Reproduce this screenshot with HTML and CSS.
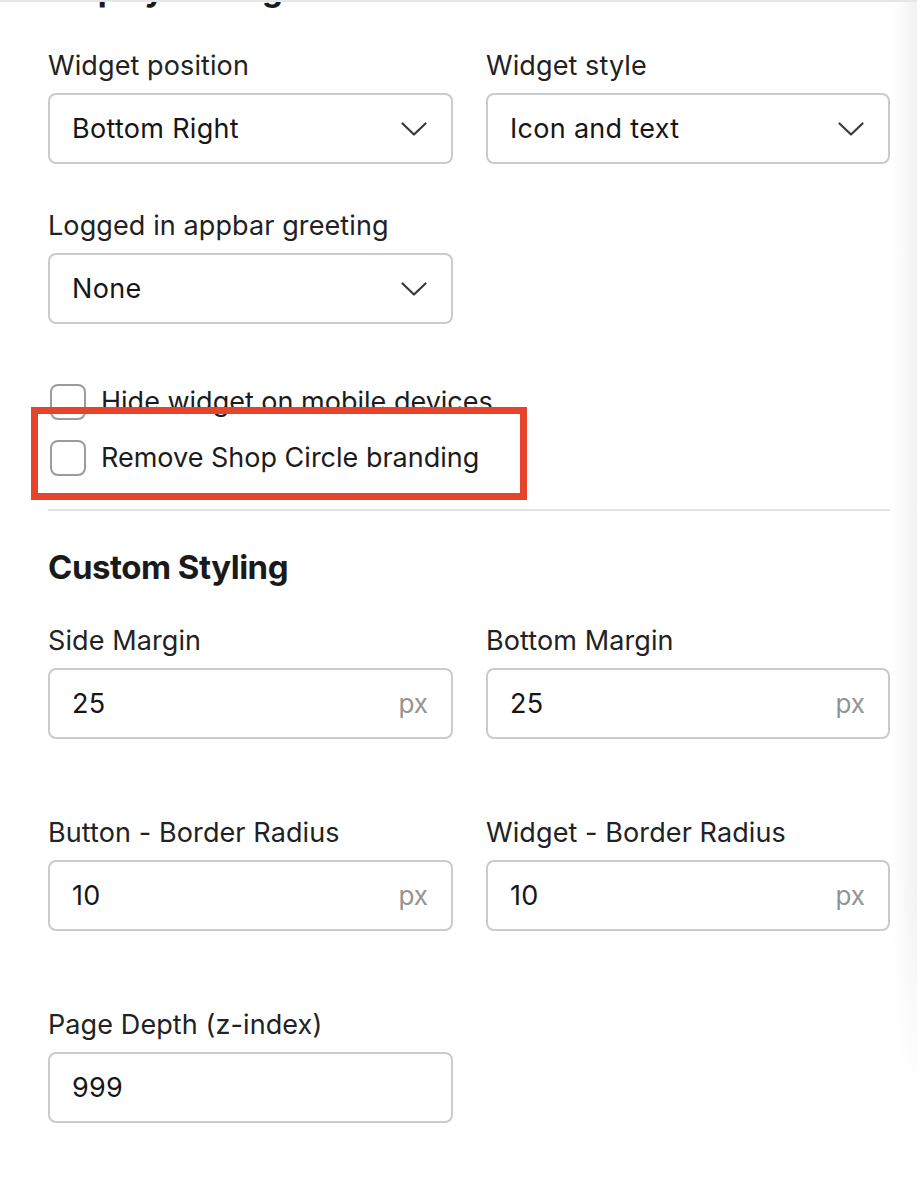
FILE: index.html
```html
<!DOCTYPE html>
<html lang="en">
<head>
<meta charset="utf-8">
<title>Display Settings</title>
<link rel="stylesheet" href="styles.css">
</head>
<body>
<div class="page">
  <div class="panel">
    <h2 class="section-title section-title--cut">Display Settings</h2>

    <div class="row">
      <div class="field">
        <label class="label">Widget position</label>
        <div class="control select">
          <span class="value">Bottom Right</span>
          <svg class="chevron" viewBox="0 0 26 14" width="26" height="14"><path d="M1.5 1.5 L13 12.5 L24.5 1.5" fill="none" stroke="#3a3a3a" stroke-width="2.2" stroke-linecap="round" stroke-linejoin="round"/></svg>
        </div>
      </div>
      <div class="field">
        <label class="label">Widget style</label>
        <div class="control select">
          <span class="value">Icon and text</span>
          <svg class="chevron" viewBox="0 0 26 14" width="26" height="14"><path d="M1.5 1.5 L13 12.5 L24.5 1.5" fill="none" stroke="#3a3a3a" stroke-width="2.2" stroke-linecap="round" stroke-linejoin="round"/></svg>
        </div>
      </div>
    </div>

    <div class="row row--second">
      <div class="field">
        <label class="label">Logged in appbar greeting</label>
        <div class="control select">
          <span class="value">None</span>
          <svg class="chevron" viewBox="0 0 26 14" width="26" height="14"><path d="M1.5 1.5 L13 12.5 L24.5 1.5" fill="none" stroke="#3a3a3a" stroke-width="2.2" stroke-linecap="round" stroke-linejoin="round"/></svg>
        </div>
      </div>
    </div>

    <div class="checks">
      <label class="check"><span class="box"></span><span class="check-text">Hide widget on mobile devices</span></label>
      <label class="check"><span class="box"></span><span class="check-text">Remove Shop Circle branding</span></label>
      <span class="highlight"></span>
    </div>

    <hr class="divider">

    <h2 class="section-title">Custom Styling</h2>

    <div class="row row--styling">
      <div class="field">
        <label class="label">Side Margin</label>
        <div class="control input"><span class="value">25</span><span class="suffix">px</span></div>
      </div>
      <div class="field">
        <label class="label">Bottom Margin</label>
        <div class="control input"><span class="value">25</span><span class="suffix">px</span></div>
      </div>
    </div>

    <div class="row row--styling-next">
      <div class="field">
        <label class="label">Button - Border Radius</label>
        <div class="control input"><span class="value">10</span><span class="suffix">px</span></div>
      </div>
      <div class="field">
        <label class="label">Widget - Border Radius</label>
        <div class="control input"><span class="value">10</span><span class="suffix">px</span></div>
      </div>
    </div>

    <div class="row row--styling-next">
      <div class="field">
        <label class="label">Page Depth (z-index)</label>
        <div class="control input"><span class="value">999</span></div>
      </div>
    </div>
  </div>
  <div class="edge-shade"></div>
</div>
</body>
</html>
```

FILE: styles.css
```css
* { box-sizing: border-box; }

html, body {
  margin: 0;
  padding: 0;
  background: #ffffff;
}

body {
  font-family: "Inter", "Noto Sans", "Liberation Sans", sans-serif;
  color: #1f1f1f;
  -webkit-font-smoothing: antialiased;
}

.page {
  position: relative;
  width: 917px;
  min-height: 1180px;
  overflow: hidden;
  border-top: 2px solid #e6e6e6;
}

.panel {
  padding: 0 27px 0 48px;
}

.section-title {
  margin: 0;
  font-size: 33px;
  font-weight: 700;
  letter-spacing: -0.5px;
  line-height: 40px;
  color: #1a1a1a;
}

.section-title--cut {
  margin-top: -33px;
  margin-bottom: 41px;
}

.row {
  display: grid;
  grid-template-columns: 405px 404px;
  column-gap: 33px;
}

.row--second { margin-top: 46px; }

.field {
  display: flex;
  flex-direction: column;
  gap: 11px;
}

.label {
  font-size: 27px;
  line-height: 32px;
  color: #222222;
  letter-spacing: 0.1px;
}

.control {
  height: 71px;
  border: 2px solid #cbcbcb;
  border-radius: 8px;
  background: #ffffff;
  display: flex;
  align-items: center;
  justify-content: space-between;
  padding: 0 23px 0 22px;
}

.value {
  font-size: 27px;
  letter-spacing: 0.3px;
  color: #161616;
}

.chevron { display: block; margin-right: 1px; }

.suffix {
  font-size: 26px;
  color: #949494;
}

.checks {
  position: relative;
  margin-top: 60px;
  display: flex;
  flex-direction: column;
  gap: 21px;
}

.check {
  display: flex;
  align-items: center;
  gap: 15px;
  height: 35px;
  padding-left: 2px;
}

.box {
  width: 36px;
  height: 36px;
  border: 2px solid #9b9b9b;
  border-radius: 8px;
  background: #ffffff;
  flex: none;
}

.check-text {
  font-size: 27px;
  color: #1c1c1c;
  line-height: 32px;
}

.highlight {
  position: absolute;
  left: -17px;
  top: 23px;
  width: 496px;
  height: 93px;
  border: 7px solid #e8432b;
  pointer-events: none;
}

.divider {
  margin: 34px 0 0;
  border: 0;
  height: 2px;
  background: #e4e4e4;
}

.divider + .section-title {
  margin-top: 36px;
  margin-bottom: 38px;
}

.row--styling-next { margin-top: 78px; }

.edge-shade {
  position: absolute;
  top: 0;
  right: 0;
  width: 24px;
  height: 1100px;
  background: linear-gradient(to right, rgba(240,240,240,0), #f1f1f1);
  -webkit-mask-image: linear-gradient(to bottom, #000 80%, transparent);
  mask-image: linear-gradient(to bottom, #000 80%, transparent);
  pointer-events: none;
}
```
